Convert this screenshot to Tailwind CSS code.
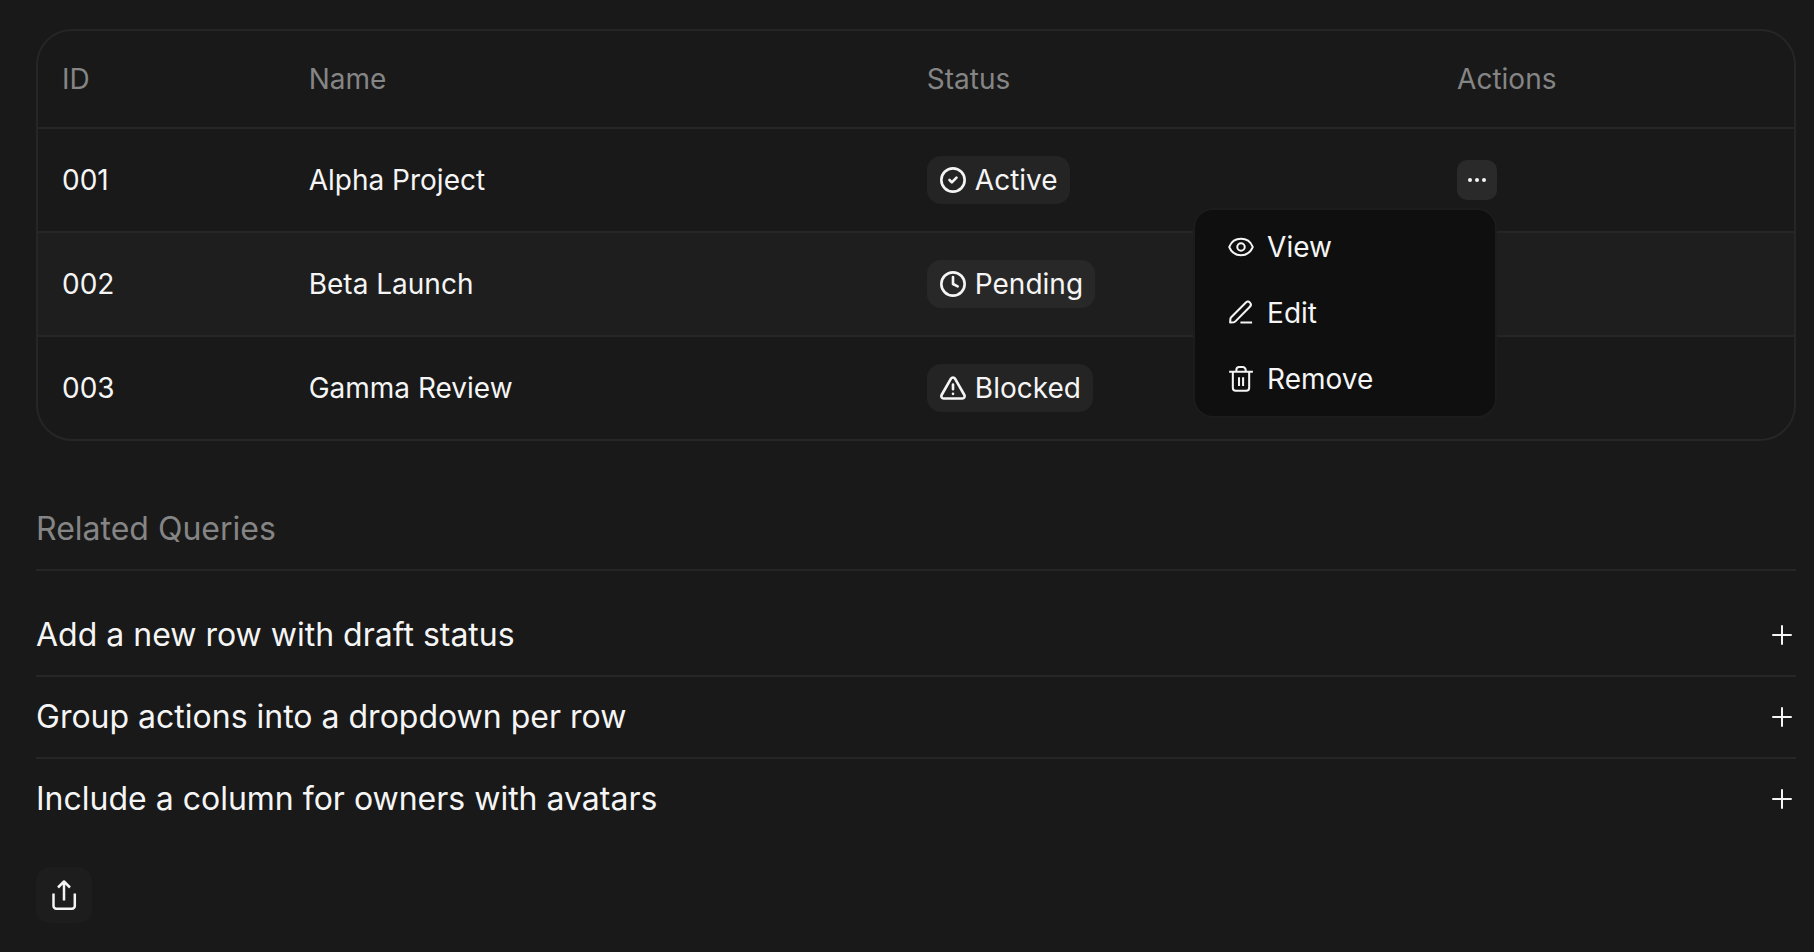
<!DOCTYPE html>
<html lang="en">
<head>
    <meta charset="UTF-8">
    <meta name="viewport" content="width=device-width, initial-scale=1.0">
    <title>Projects</title>
    <script src="https://cdn.jsdelivr.net/npm/@tailwindcss/browser@4"></script>
</head>
<body class="min-h-screen bg-[#191919] pt-[29px] pr-[18px] pb-7 pl-9 font-['Inter',sans-serif] text-[#f5f5f5]">

    <!-- Projects table -->
    <div class="rounded-[36px] border-2 border-[#262626]">
        <table class="w-full table-fixed border-separate border-spacing-0 text-left text-[28px] leading-10">
            <colgroup>
                <col class="w-[14.05%]">
                <col class="w-[35.2%]">
                <col class="w-[30.2%]">
                <col>
            </colgroup>
            <thead>
                <tr class="h-[98px] text-[#858585] *:border-b-2 *:border-[#262626]">
                    <th scope="col" class="px-6 font-normal">ID</th>
                    <th scope="col" class="px-6 font-normal">Name</th>
                    <th scope="col" class="px-6 font-normal">Status</th>
                    <th scope="col" class="px-6 font-normal">Actions</th>
                </tr>
            </thead>
            <tbody>
                <tr class="h-[104px] *:border-b-2 *:border-[#262626]">
                    <td class="px-6">001</td>
                    <td class="px-6">Alpha Project</td>
                    <td class="px-6">
                        <span class="flex h-12 w-fit items-center gap-2 rounded-[14px] bg-[#242424] px-3">
                            <svg class="size-7" viewBox="0 0 24 24" fill="none" stroke="currentColor" stroke-width="2.25" stroke-linecap="round" stroke-linejoin="round"><circle cx="12" cy="12" r="10"/><path d="m9 12 2 2 4-4"/></svg>
                            Active
                        </span>
                    </td>
                    <td class="px-6">
                        <div class="relative w-fit">
                            <button type="button" aria-label="Row actions" aria-expanded="true" class="flex size-10 items-center justify-center rounded-[10px] bg-[#2a2a2a]">
                                <svg class="size-6" viewBox="0 0 24 24" fill="currentColor"><circle cx="5" cy="12" r="2"/><circle cx="12" cy="12" r="2"/><circle cx="19" cy="12" r="2"/></svg>
                            </button>
                            <!-- Dropdown -->
                            <div role="menu" class="absolute top-12 right-0 w-[304px] rounded-[20px] border-2 border-[#1c1c1c] bg-[#0f0f0f] py-1">
                                <button type="button" role="menuitem" class="flex h-[66px] w-full items-center gap-3 px-8">
                                    <svg class="size-7" viewBox="0 0 24 24" fill="none" stroke="currentColor" stroke-width="1.75" stroke-linecap="round" stroke-linejoin="round"><path d="M2.062 12.348a1 1 0 0 1 0-.696 10.75 10.75 0 0 1 19.876 0 1 1 0 0 1 0 .696 10.75 10.75 0 0 1-19.876 0"/><circle cx="12" cy="12" r="3.200"/></svg>
                                    View
                                </button>
                                <button type="button" role="menuitem" class="flex h-[66px] w-full items-center gap-3 px-8">
                                    <svg class="size-7" viewBox="0 0 24 24" fill="none" stroke="currentColor" stroke-width="1.75" stroke-linejoin="round"><path d="M16.200 3 3.600 15.600Q3 16.200 2.900 17L2.700 20.100 5.800 19.900Q6.600 19.800 7.200 19.200L19.600 6.600A2.400 2.400 0 0 0 16.200 3zM11.500 20.200h10"/></svg>
                                    Edit
                                </button>
                                <button type="button" role="menuitem" class="flex h-[66px] w-full items-center gap-3 px-8">
                                    <svg class="size-7" viewBox="0 0 24 24" fill="none" stroke="currentColor" stroke-width="1.75" stroke-linejoin="round"><path d="M1.800 5.700h20.400M5 5.700V19.500A2.500 2.500 0 0 0 7.500 22h9a2.500 2.500 0 0 0 2.500-2.500V5.700M8 5.700V4.300A2.500 2.500 0 0 1 10.500 1.800h3A2.500 2.500 0 0 1 16 4.300V5.700M10.300 10.500v7.500M13.800 10.500v7.500"/></svg>
                                    Remove
                                </button>
                            </div>
                        </div>
                    </td>
                </tr>
                <tr class="h-[104px] bg-[#1e1e1e] *:border-b-2 *:border-[#262626]">
                    <td class="px-6">002</td>
                    <td class="px-6">Beta Launch</td>
                    <td class="px-6">
                        <span class="flex h-12 w-fit items-center gap-2 rounded-[14px] bg-[#282828] px-3">
                            <svg class="size-7" viewBox="0 0 24 24" fill="none" stroke="currentColor" stroke-width="2.25" stroke-linecap="round" stroke-linejoin="round"><circle cx="12" cy="12" r="10"/><path d="M12 6v6l4 2"/></svg>
                            Pending
                        </span>
                    </td>
                    <td class="px-6"></td>
                </tr>
                <tr class="h-[102px]">
                    <td class="px-6">003</td>
                    <td class="px-6">Gamma Review</td>
                    <td class="px-6">
                        <span class="flex h-12 w-fit items-center gap-2 rounded-[14px] bg-[#242424] px-3">
                            <svg class="size-7" viewBox="0 0 24 24" fill="none" stroke="currentColor" stroke-width="2.25" stroke-linecap="round" stroke-linejoin="round"><path d="m21.730 18-8-14a2 2 0 0 0-3.480 0l-8 14A2 2 0 0 0 4 21h16a2 2 0 0 0 1.730-3M12 9v4M12 17h.01"/></svg>
                            Blocked
                        </span>
                    </td>
                    <td class="px-6"></td>
                </tr>
            </tbody>
        </table>
    </div>

    <!-- Related queries -->
    <section class="mt-16 text-[32px] leading-12">
        <h2 class="border-b-2 border-[#262626] pb-4 text-[#858585]">Related Queries</h2>
        <div class="mt-6">
            <button type="button" class="flex h-[82px] w-full items-center justify-between border-b-2 border-[#262626]">
                Add a new row with draft status
                <svg class="size-7" viewBox="0 0 28 28" fill="none" stroke="currentColor" stroke-width="2" stroke-linecap="round"><path d="M14 5v18M5 14h18"/></svg>
            </button>
            <button type="button" class="flex h-[82px] w-full items-center justify-between border-b-2 border-[#262626]">
                Group actions into a dropdown per row
                <svg class="size-7" viewBox="0 0 28 28" fill="none" stroke="currentColor" stroke-width="2" stroke-linecap="round"><path d="M14 5v18M5 14h18"/></svg>
            </button>
            <button type="button" class="flex h-20 w-full items-center justify-between">
                Include a column for owners with avatars
                <svg class="size-7" viewBox="0 0 28 28" fill="none" stroke="currentColor" stroke-width="2" stroke-linecap="round"><path d="M14 5v18M5 14h18"/></svg>
            </button>
        </div>
    </section>

    <button type="button" aria-label="Share" class="mt-7 flex size-14 items-center justify-center rounded-[14px] bg-[#1d1d1d]">
        <svg class="size-8" viewBox="0 0 32 32" fill="none" stroke="currentColor" stroke-width="2.500" stroke-linejoin="round"><path d="M16 21.500V2.500M10 8.500l6-6 6 6M5.500 14.500V27a2.800 2.800 0 0 0 2.800 2.800h15.700a2.800 2.800 0 0 0 2.800-2.800V14.500"/></svg>
    </button>

</body>
</html>
